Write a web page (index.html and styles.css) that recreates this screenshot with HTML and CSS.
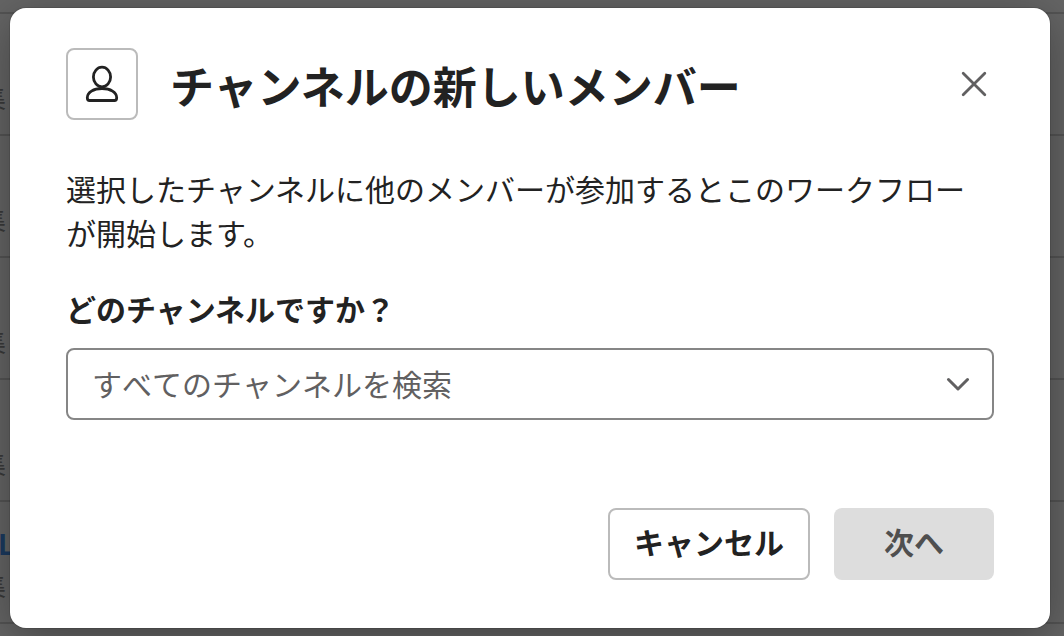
FILE: index.html
```
<!DOCTYPE html>
<html lang="ja">

<head>
    <meta charset="UTF-8">
    <meta name="viewport" content="width=device-width, initial-scale=1.0">
    <title>チャンネルの新しいメンバー</title>
    <link rel="stylesheet" href="styles.css">
</head>

<body>
    <div class="page">
        <div class="row row-first"></div>
        <div class="row"><span class="edit">集</span></div>
        <div class="row"><span class="edit">集</span></div>
        <div class="row"><span class="edit">集</span></div>
        <div class="row"><span class="edit">集</span></div>
        <div class="row"><span class="link">L</span><span class="edit">集</span></div>
        <div class="row"></div>
    </div>

    <div class="modal">
        <div class="header">
            <div class="icon">
                <svg width="40" height="40" viewBox="0 0 40 40">
                    <ellipse cx="20" cy="13" rx="8.600" ry="9.800" />
                    <path d="M20 24.500c8.500 0 14.700 4 14.700 9.200 0 2-.7 2.800-2.300 2.800H7.600c-1.600 0-2.300-.8-2.300-2.800 0-5.200 6.200-9.200 14.700-9.200z" />
                </svg>
            </div>
            <h1 class="title">チャンネルの新しいメンバー</h1>
            <button class="close" aria-label="閉じる">
                <svg width="28" height="28" viewBox="0 0 28 28">
                    <path d="M3.200 3.200l21.600 21.600M24.800 3.200L3.200 24.800" />
                </svg>
            </button>
        </div>
        <p class="text">選択したチャンネルに他のメンバーが参加するとこのワークフローが開始します。</p>
        <div class="label">どのチャンネルですか？</div>
        <div class="select">
            <span>すべてのチャンネルを検索</span>
            <svg width="24" height="14" viewBox="0 0 24 14">
                <path d="M2.500 2.500L12 12l9.500-9.500" />
            </svg>
        </div>
        <div class="footer">
            <button class="btn cancel">キャンセル</button>
            <button class="btn next" disabled>次へ</button>
        </div>
    </div>
</body>

</html>
```
FILE: styles.css
```
* {
    margin: 0;
    padding: 0;
    box-sizing: border-box;
}

body {
    height: 636px;
    overflow: hidden;
    position: relative;
    background-color: #656565;
    font-family: "Noto Sans CJK JP", sans-serif;
    color: #222;
}

svg {
    display: block;
    fill: none;
    stroke-linecap: round;
    stroke-linejoin: round;
}

.page {
    height: 636px;
    overflow: hidden;
}

.row {
    height: 122px;
    border-bottom: 2px solid #545454;
    position: relative;
}

.row-first {
    height: 14px;
}

.edit {
    position: absolute;
    left: -20px;
    top: 65px;
    font-size: 26px;
    line-height: 36px;
    color: #3a3a3a;
}

.link {
    position: absolute;
    left: -2px;
    top: 21px;
    font-size: 28px;
    font-weight: 700;
    line-height: 40px;
    color: #1b3a60;
}

/* 弹窗 */
.modal {
    position: absolute;
    left: 10px;
    top: 8px;
    width: 1040px;
    height: 620px;
    padding: 40px 56px 48px;
    border-radius: 16px;
    background-color: #fff;
    box-shadow: 0 0 0 1px rgba(0, 0, 0, 0.1), 0 10px 48px rgba(0, 0, 0, 0.35);
    display: flex;
    flex-direction: column;
}

.header {
    display: flex;
    align-items: center;
    height: 72px;
}

.icon {
    width: 72px;
    height: 72px;
    border: 2px solid #bbb;
    border-radius: 8px;
    display: flex;
    align-items: center;
    justify-content: center;
}

.icon svg {
    stroke: #222;
    stroke-width: 2.8;
}

.title {
    flex: 1;
    margin-left: 32px;
    padding-top: 2px;
    font-size: 44px;
    font-weight: 700;
    line-height: 72px;
    white-space: nowrap;
}

.close {
    width: 28px;
    height: 28px;
    margin-right: 6px;
    border: none;
    background: none;
}

.close svg {
    stroke: #616061;
    stroke-width: 2.8;
}

.text {
    margin-top: 46px;
    font-size: 30px;
    line-height: 44px;
}

.label {
    margin-top: 32px;
    font-size: 30px;
    font-weight: 700;
    line-height: 44px;
}

.select {
    height: 72px;
    margin-top: 18px;
    padding: 0 22px 0 24px;
    border: 2px solid #868686;
    border-radius: 8px;
    display: flex;
    align-items: center;
    justify-content: space-between;
    font-size: 30px;
    font-kerning: none;
    color: #616061;
}

.select span {
    padding-bottom: 3px;
}

.select svg {
    stroke: #616061;
    stroke-width: 3;
}

.footer {
    display: flex;
    justify-content: flex-end;
    gap: 24px;
    margin-top: auto;
}

.btn {
    height: 72px;
    padding-bottom: 6px;
    border-radius: 8px;
    font-family: inherit;
    font-size: 30px;
    font-weight: 700;
}

.cancel {
    width: 202px;
    border: 2px solid #bbb;
    background-color: #fff;
    color: #222;
}

.next {
    width: 160px;
    border: none;
    background-color: #ddd;
    color: #4f4f4f;
}
```
